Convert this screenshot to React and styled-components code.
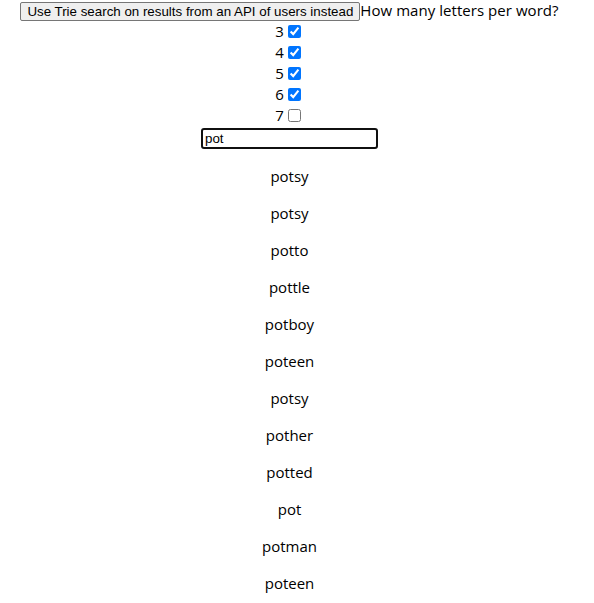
import React, { useState } from 'react';
import styled, { createGlobalStyle } from 'styled-components';

const GlobalStyle = createGlobalStyle`
  html {
    overflow: hidden;
  }
  body {
    margin: 0;
    background: #fff;
    color: #000;
    font-family: "Open Sans", "Noto Sans", sans-serif;
    font-size: 15px;
    line-height: 21px;
  }
`;

const Page = styled.div`
  width: 579px;
  text-align: center;
`;

const Header = styled.div`
  height: 21px;
  white-space: nowrap;
`;

const ModeButton = styled.button`
  font-family: "Liberation Sans", Arial, sans-serif;
  font-size: 13.33px;
  line-height: 15px;
  padding: 1px 6px;
  background: #efefef;
  color: #000;
  border: 1px solid #767676;
  border-radius: 2px;
  vertical-align: baseline;
`;

const Question = styled.span`
  letter-spacing: 0.05px;
`;

const LetterRow = styled.div`
  height: 21px;
  display: flex;
  justify-content: center;
  align-items: center;
`;

const LetterBox = styled.input`
  width: 13px;
  height: 13px;
  margin: 3px 3px 3px 4px;
  accent-color: #0075ff;
`;

const SearchRow = styled.div`
  height: 24px;
`;

const Search = styled.input`
  box-sizing: border-box;
  width: 177px;
  height: 21px;
  margin-top: 2px;
  padding: 1px 2px;
  font-family: "Liberation Sans", Arial, sans-serif;
  font-size: 13.33px;
  color: #000;
  border: 2px solid #101010;
  border-radius: 3px;
  outline: none;
  vertical-align: top;
`;

const WordList = styled.div``;

const Word = styled.p`
  margin: 16px 0;
`;

const words = [
  'potsy', 'potsy', 'potto', 'pottle', 'potboy', 'poteen', 'potsy',
  'pother', 'potted', 'pot', 'potman', 'poteen',
];

export default function App() {
  const [lengths, setLengths] = useState({ 3: true, 4: true, 5: true, 6: true, 7: false });
  const [query, setQuery] = useState('pot');

  return (
    <Page>
      <GlobalStyle />
      <Header>
        <ModeButton>Use Trie search on results from an API of users instead</ModeButton>
        <Question>How many letters per word?</Question>
      </Header>
      {[3, 4, 5, 6, 7].map((n) => (
        <LetterRow key={n}>
          {n}
          <LetterBox
            type="checkbox"
            checked={lengths[n]}
            onChange={() => setLengths({ ...lengths, [n]: !lengths[n] })}
          />
        </LetterRow>
      ))}
      <SearchRow>
        <Search value={query} onChange={(e) => setQuery(e.target.value)} />
      </SearchRow>
      <WordList>
        {words.map((w, i) => (
          <Word key={i}>{w}</Word>
        ))}
      </WordList>
    </Page>
  );
}
